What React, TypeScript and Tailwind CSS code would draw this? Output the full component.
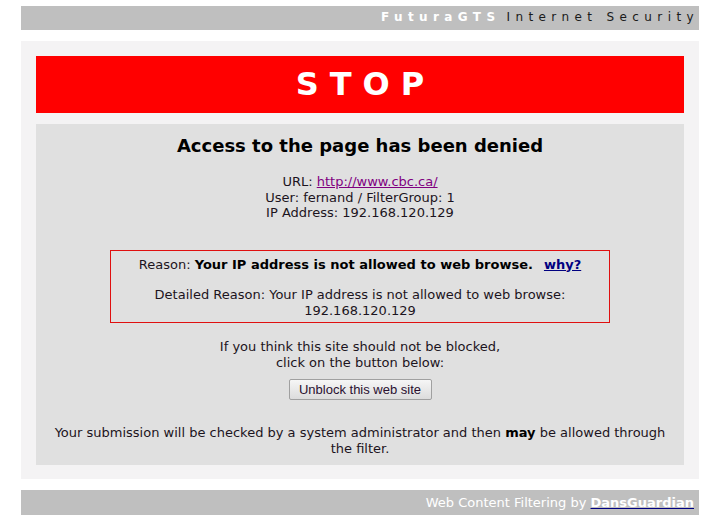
export default function App() {
  return (
    <div className="min-h-[522px] bg-white pl-[21px] pt-[6px] font-['DejaVu_Sans',Verdana,sans-serif] text-[13px] leading-[15.5px] text-[#1c1420]">
      <div className="w-[678px]">
        <div className="flex h-[24px] items-center justify-end bg-[#bfbfbf] text-[12px] tracking-[5.4px]">
          <span className="font-bold text-white">FuturaGTS</span>
          <span className="ml-[6px] text-[#1a1a1a]">Internet Security</span>
        </div>

        <div className="mt-[11px] bg-[#f4f3f4] px-[15px] pt-[15px] pb-[14px]">
          <div className="flex h-[57px] items-center justify-center bg-[#ff0000] pl-[11px] text-[32px] font-bold tracking-[11px] text-white">
            STOP
          </div>

          <div className="mt-[11px] flex flex-col items-center bg-[#e0e0e0] px-[12px] pt-[11px] pb-[9px] text-center">
            <h1 className="text-[18px] leading-[22px] font-bold text-black">
              Access to the page has been denied
            </h1>

            <p className="mt-[17px]">
              URL:{' '}
              <a href="#" className="text-[#800080] underline">
                http://www.cbc.ca/
              </a>
              <br />
              User: fernand / FilterGroup: 1
              <br />
              IP Address: 192.168.120.129
            </p>

            <div className="mt-[29px] w-[500px] border border-[#e01010] pt-[6px] pb-[4px]">
              <p>
                Reason: <b className="text-black">Your IP address is not allowed to web browse.</b>
                <a href="#" className="ml-[11px] font-bold text-[#000080] underline">
                  why?
                </a>
              </p>
              <p className="mt-[15px]">
                Detailed Reason: Your IP address is not allowed to web browse:
                <br />
                192.168.120.129
              </p>
            </div>

            <p className="mt-[16px]">
              If you think this site should not be blocked,
              <br />
              click on the button below:
            </p>

            <button className="mt-[9px] h-[21px] w-[143px] rounded-[2px] border border-[#a0a0a0] bg-gradient-to-b from-[#f6f6f6] to-[#dcdcdc] font-['Liberation_Sans',Arial,sans-serif] text-[13px] text-[#2a1030]">
              Unblock this web site
            </button>

            <p className="mt-[25px]">
              Your submission will be checked by a system administrator and then{' '}
              <b className="text-black">may</b> be allowed through the filter.
            </p>
          </div>
        </div>

        <div className="mt-[11px] flex h-[25px] items-center justify-end bg-[#bfbfbf] pr-[5px] text-white">
          <span>
            Web Content Filtering by{' '}
            <a href="#" className="font-bold text-white underline decoration-[#000080]">
              DansGuardian
            </a>
          </span>
        </div>
      </div>
    </div>
  );
}
